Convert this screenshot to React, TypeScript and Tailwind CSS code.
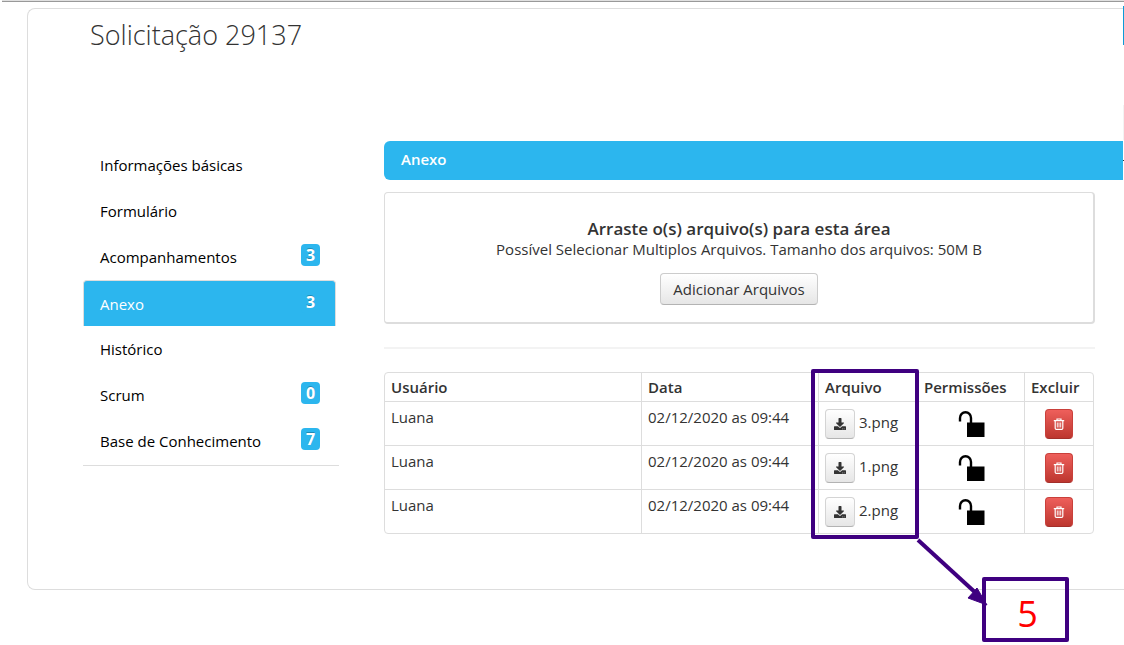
import { FaDownload } from "react-icons/fa";

const navItems: { label: string; count?: number; active?: boolean }[] = [
  { label: "Informações básicas" },
  { label: "Formulário" },
  { label: "Acompanhamentos", count: 3 },
  { label: "Anexo", count: 3, active: true },
  { label: "Histórico" },
  { label: "Scrum", count: 0 },
  { label: "Base de Conhecimento", count: 7 },
];

const files = [
  { user: "Luana", date: "02/12/2020 as 09:44", name: "3.png" },
  { user: "Luana", date: "02/12/2020 as 09:44", name: "1.png" },
  { user: "Luana", date: "02/12/2020 as 09:44", name: "2.png" },
];

function UnlockIcon() {
  return (
    <svg width="28" height="28" viewBox="0 0 28 28" aria-hidden="true">
      <path d="M3 11.500V8a5.500 5.800 0 0 1 11 0V13" fill="none" stroke="#000" strokeWidth="2.400" />
      <rect x="10" y="12.500" width="17.500" height="14.500" fill="#000" />
    </svg>
  );
}

function TrashIcon() {
  return (
    <svg width="12" height="12" viewBox="0 0 12 12" fill="none" stroke="#fff" aria-hidden="true">
      <path d="M4 2.400V1h4v1.400M.8 2.700h10.400M2.200 3v7.200q0 1.200 1.200 1.200h5.200q1.200 0 1.200-1.200V3" strokeWidth="1.200" />
      <path d="M4.300 4.500v5M6 4.500v5M7.700 4.500v5" strokeWidth=".9" />
    </svg>
  );
}

function Sidebar() {
  return (
    <nav className="mt-px w-[256px] shrink-0 self-start border-b border-[#ddd] pb-px">
      <ul>
        {navItems.map((item) => (
          <li key={item.label} className="h-[46px] pr-[3px]">
            <a
              href="#"
              className={
                item.active
                  ? "flex h-full items-center justify-between rounded-t border border-b-0 border-[#ddd] bg-[#2cb6ee] pr-[15px] pl-4 text-white"
                  : "flex h-full items-center justify-between pr-4 pl-[17px] text-black"
              }
            >
              <span>{item.label}</span>
              {item.count !== undefined && (
                <span className="mb-1 w-[19px] rounded bg-[#2cb6ee] text-center text-[16px] leading-[22px] font-bold text-white [text-shadow:0_-1px_0_rgba(0,0,0,0.25)]">
                  {item.count}
                </span>
              )}
            </a>
          </li>
        ))}
      </ul>
    </nav>
  );
}

function FileTable() {
  const head = "h-7 px-1.5 text-left font-semibold";
  const cell = "h-11 border-t border-[#ddd] px-1.5";
  return (
    <div className="relative mt-[23px] mr-px">
      <div className="overflow-hidden rounded border border-[#ddd]">
        <table className="w-full table-fixed border-separate border-spacing-0">
          <thead>
            <tr>
              <th className={head}>Usuário</th>
              <th className={`${head} w-[177px] border-l border-[#ddd]`}>Data</th>
              <th className={`${head} w-[99px] border-l border-[#ddd]`}>Arquivo</th>
              <th className={`${head} w-[107px] border-l border-[#ddd]`}>Permissões</th>
              <th className={`${head} w-[69px] border-l border-[#ddd]`}>Excluir</th>
            </tr>
          </thead>
          <tbody>
            {files.map((file) => (
              <tr key={file.name}>
                <td className={`${cell} pt-[5px] align-top`}>{file.user}</td>
                <td className={`${cell} border-l pt-[5px] align-top`}>{file.date}</td>
                <td className={`${cell} border-l`}>
                  <div className="flex items-center gap-1">
                    <button
                      type="button"
                      aria-label={`Baixar ${file.name}`}
                      className="flex size-[30px] shrink-0 items-center justify-center rounded border border-[#d4d4d4] border-b-[#b3b3b3] bg-linear-to-b from-white to-[#e6e6e6]"
                    >
                      <FaDownload size={12} />
                    </button>
                    <span className="pb-1">{file.name}</span>
                  </div>
                </td>
                <td className={`${cell} border-l`}>
                  <div className="flex justify-center">
                    <UnlockIcon />
                  </div>
                </td>
                <td className={`${cell} border-l`}>
                  <button
                    type="button"
                    aria-label={`Excluir ${file.name}`}
                    className="mx-auto flex h-[30px] w-7 items-center justify-center rounded border border-[#c9403b] border-b-[#a32f2a] bg-linear-to-b from-[#ee5f5b] to-[#bd362f]"
                  >
                    <TrashIcon />
                  </button>
                </td>
              </tr>
            ))}
          </tbody>
        </table>
      </div>

      <div className="absolute -top-[3px] right-[175px] h-[170px] w-[108px] rounded-xs border-4 border-[#3f0080]" />
      <svg className="absolute top-[165px] right-[102px]" width="76" height="72" viewBox="0 0 76 72" aria-hidden="true">
        <path d="M2 3 62 58" stroke="#3f0080" strokeWidth="4" />
        <path d="M71 68 52 61 61 51Z" fill="#3f0080" stroke="#3f0080" strokeWidth="1" />
      </svg>
      <div className="absolute top-[205px] right-[25px] flex h-[65px] w-[87px] items-center justify-center rounded-xs border-4 border-[#3f0080] pt-2 pl-1 text-[36px] text-[#f00]">
        5
      </div>
    </div>
  );
}

export default function App() {
  return (
    <div className="relative overflow-hidden bg-white pb-14 font-['Open_Sans',sans-serif] text-[15px] leading-5 font-normal text-[#333]">
      <div className="ml-0.5 h-0.5 border-b border-[#999] bg-[#e0e0e0]" />
      <div className="mt-1.5 ml-[27px] rounded-l-lg border border-r-0 border-[#ddd] pb-[55px] pl-[55px]">
        <h1 className="pt-2 pl-[7px] text-[27px] leading-9 font-light">Solicitação 29137</h1>
        <div className="mt-[88px] flex">
          <Sidebar />
          <main className="ml-[45px] min-w-0 flex-1 pr-px">
            <h2 className="h-[39px] rounded-l-md bg-[#2cb6ee] px-[17px] pt-2 leading-5 font-semibold text-white">Anexo</h2>
            <div className="mr-7">
              <section className="mt-3 flex flex-col items-center rounded border border-r-2 border-b-2 border-[#ddd] pt-[26px] pb-[17px]">
                <h3 className="text-[17px] leading-5 font-semibold">Arraste o(s) arquivo(s) para esta área</h3>
                <p>Possível Selecionar Multiplos Arquivos. Tamanho dos arquivos: 50M B</p>
                <button
                  type="button"
                  className="mt-[14px] h-8 rounded border border-[#ccc] border-b-[#b3b3b3] bg-linear-to-b from-white to-[#e6e6e6] px-3"
                >
                  Adicionar Arquivos
                </button>
              </section>
              <hr className="mt-[23px] border-t-2 border-[#f3f3f3]" />
              <FileTable />
            </div>
          </main>
        </div>
      </div>
      <div className="absolute top-1.5 right-0 h-[39px] w-px bg-[#0c9bd8]" />
      <div className="absolute top-[105px] right-0 h-[35px] w-px bg-[#f3f3f3]" />
      <div className="absolute top-40 right-0 h-px w-px bg-[#333]" />
    </div>
  );
}
